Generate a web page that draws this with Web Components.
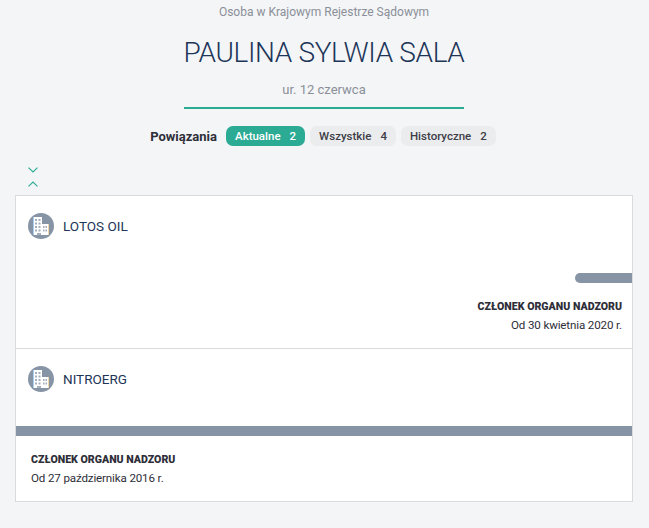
<!DOCTYPE html>
<html lang="pl">
<head>
<meta charset="utf-8">
<title>Paulina Sylwia Sala</title>
<style>
  html, body { margin: 0; background: #f3f5f7; }
  body { font-family: "Roboto", "Liberation Sans", sans-serif; color: #2e2e38; }
</style>
</head>
<body>
<person-page></person-page>

<script>
const buildingIcon = `
  <svg width="26" height="26" viewBox="0 0 26 26">
    <circle cx="13" cy="13" r="13" fill="#8794a6"/>
    <path fill="#fff" d="M5 4h9v7h7v11H5z"/>
    <path fill="#a9d0f0" d="M5 4h1v18H5z"/>
    <path fill="#f0d9a8" d="M20 11h1v11h-1z"/>
    <path fill="#a5afbd" d="M7 6h2v2H7zM10.500 6h2v2h-2zM7 9.500h2v2H7zM10.500 9.500h2v2h-2zM7 13h2v2H7zM10.500 13h2v2h-2zM7 16.500h2v2H7zM10.500 16.500h2v2h-2zM15 13h1.500v2H15zM17.500 13H19v2h-1.500zM15 16.500h1.500v2H15zM17.500 16.500H19v2h-1.500zM9 20h4v2H9z"/>
  </svg>`;

class FilterPill extends HTMLElement {
  constructor() {
    super();
    this.attachShadow({ mode: 'open' });
    this.shadowRoot.innerHTML = `
    <style>
      :host {
        display: flex;
        align-items: center;
        gap: 9px;
        height: 20px;
        padding: 0 9px;
        border-radius: 7px;
        background: #ebecee;
        color: #3d3d47;
        font-size: 11.500px;
        font-weight: 500;
      }
      :host([active]) { background: #2baa94; color: #fff; }
    </style>
    <slot></slot><span>${this.getAttribute('count')}</span>`;
  }
}

class CompanyRow extends HTMLElement {
  constructor() {
    super();
    this.attachShadow({ mode: 'open' });
    this.shadowRoot.innerHTML = `
    <style>
      :host { display: block; height: 152px; box-sizing: border-box; }
      :host(:not(:last-child)) { height: 153px; border-bottom: 1px solid #d9dbdd; }
      header {
        display: flex;
        align-items: center;
        gap: 9px;
        padding: 17px 0 0 12px;
        color: #1d3557;
        font-size: 13.500px;
      }
      svg { display: block; }
      .bar { height: 10px; margin-top: 34px; background: #8794a6; }
      :host([side="right"]) .bar { margin-left: auto; width: 57px; border-radius: 5px 0 0 5px; }
      .info { padding: 15px 10px 0 15px; }
      :host([side="right"]) .info { text-align: right; }
      .role { font-size: 10.600px; font-weight: 900; line-height: 17px; }
      .date { font-size: 11.600px; line-height: 20px; letter-spacing: -.15px; }
    </style>
    <header>${buildingIcon}<div><slot name="name"></slot></div></header>
    <div class="bar"></div>
    <div class="info">
      <div class="role"><slot name="role"></slot></div>
      <div class="date"><slot name="date"></slot></div>
    </div>`;
  }
}

class PersonPage extends HTMLElement {
  constructor() {
    super();
    this.attachShadow({ mode: 'open' });
    this.shadowRoot.innerHTML = `
    <style>
      :host { display: block; padding: 4px 16px 0 15px; }
      .head { display: flex; flex-direction: column; align-items: center; }
      .kind { color: #8b8f98; font-size: 12px; line-height: 16px; }
      h1 {
        margin: 14px 0 0;
        color: #1d3557;
        font-size: 28px;
        font-weight: 300;
        line-height: 38px;
        letter-spacing: -.35px;
      }
      .born { margin-top: 9px; color: #8b8f98; font-size: 13px; line-height: 18px; }
      .rule { width: 280px; height: 2px; margin-top: 8px; background: #2baa94; }
      .filters {
        display: flex;
        align-items: center;
        gap: 5px;
        margin-top: 17px;
        padding-right: 2px;
      }
      .filters b { margin-right: 4px; font-size: 13px; }
      .chevrons { display: flex; flex-direction: column; gap: 8px; margin: 21px 0 8px 13px; }
      .chevrons svg { display: block; }
      .card { background: #fff; border: 1px solid #d9dbdd; }
    </style>
    <div class="head">
      <div class="kind">Osoba w Krajowym Rejestrze Sądowym</div>
      <h1>PAULINA SYLWIA SALA</h1>
      <div class="born">ur. 12 czerwca</div>
      <div class="rule"></div>
      <div class="filters">
        <b>Powiązania</b>
        <filter-pill active count="2">Aktualne</filter-pill>
        <filter-pill count="4">Wszystkie</filter-pill>
        <filter-pill count="2">Historyczne</filter-pill>
      </div>
    </div>
    <div class="chevrons">
      <svg width="10" height="6" viewBox="0 0 10 6"><path d="M.5.700 5 5 9.500.700" fill="none" stroke="#2baa94" stroke-width="1.100"/></svg>
      <svg width="10" height="6" viewBox="0 0 10 6"><path d="M.5 5.300 5 1l4.500 4.300" fill="none" stroke="#2baa94" stroke-width="1.100"/></svg>
    </div>
    <div class="card">
      <company-row side="right">
        <span slot="name">LOTOS OIL</span>
        <span slot="role">CZŁONEK ORGANU NADZORU</span>
        <span slot="date">Od 30 kwietnia 2020 r.</span>
      </company-row>
      <company-row side="left">
        <span slot="name">NITROERG</span>
        <span slot="role">CZŁONEK ORGANU NADZORU</span>
        <span slot="date">Od 27 października 2016 r.</span>
      </company-row>
    </div>`;
  }
}

customElements.define('filter-pill', FilterPill);
customElements.define('company-row', CompanyRow);
customElements.define('person-page', PersonPage);
</script>
</body>
</html>
